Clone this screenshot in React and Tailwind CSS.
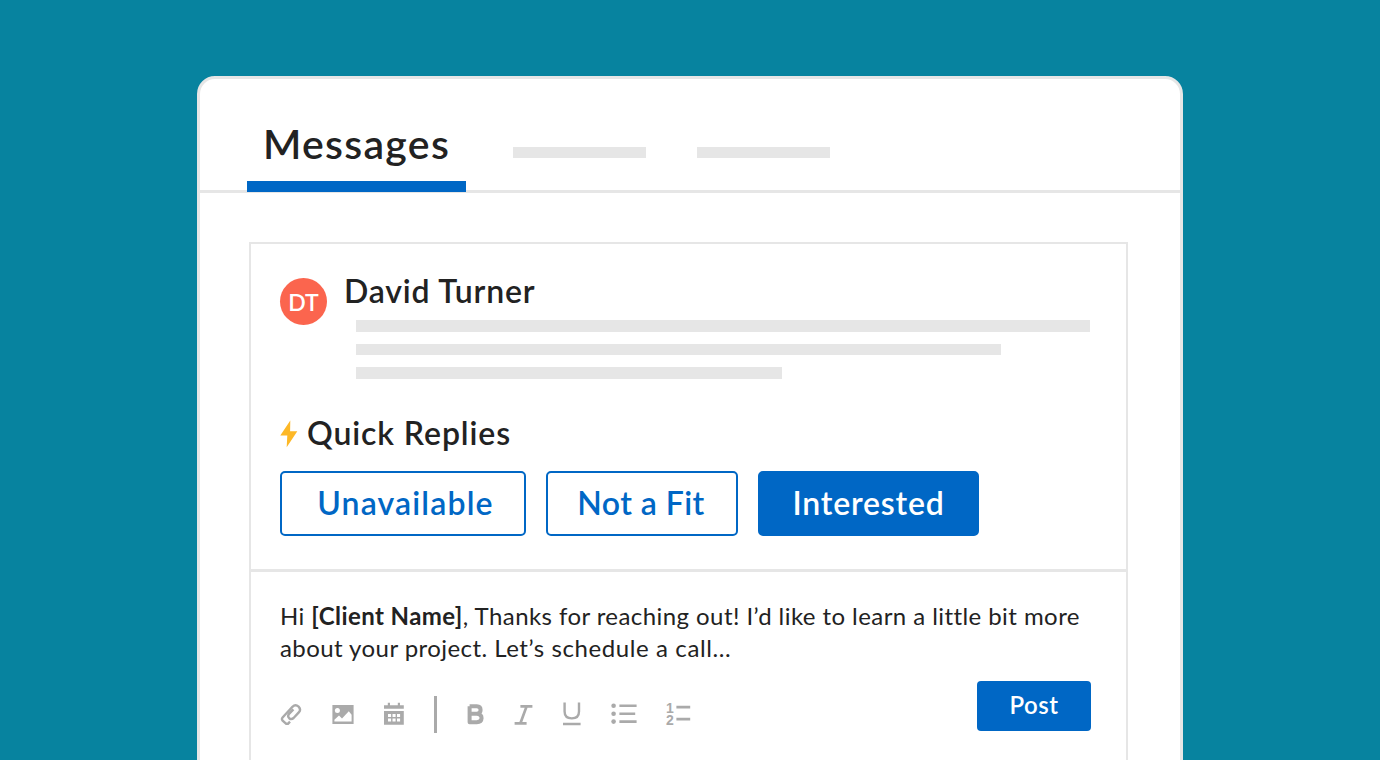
import clsx from 'clsx';

const QUICK_REPLIES = [
  { label: 'Unavailable', box: 'w-[246px]', text: 'tracking-[1.15px] pl-[5px]' },
  { label: 'Not a Fit', box: 'w-[192px]', text: 'tracking-[0.45px] pr-[2px]' },
  { label: 'Interested', box: 'w-[221px]', text: 'tracking-[0.8px]', active: true },
];

function Bar({ className }) {
  return <div className={clsx('bg-[#e6e6e6]', className)} />;
}

function BoltIcon() {
  return (
    <svg width="18" height="28" viewBox="0 0 18 28" fill="#fdb827">
      <path d="M10.3 0.5 L0.3 15.5 H7.3 L6.7 27.3 L17.3 11.3 H10.1 Z" />
    </svg>
  );
}

function LinkIcon() {
  return (
    <svg width="22" height="24" viewBox="0 0 22 24" fill="none" stroke="#aaa" strokeWidth="2.4">
      <path d="M10 19.6 L8 21.8 H6.2 L2.4 18.4 Q1.4 17 2.6 15.4 L12.4 4.8 Q15.4 2 18.6 4.6 Q21.4 7.6 18.8 10.4 L13.6 16 Q11.4 18 9.2 16.2 Q7.2 14.2 9 12 L13.4 7.4" />
    </svg>
  );
}

function ImageIcon() {
  return (
    <svg width="22" height="19" viewBox="0 0 22 19">
      <path d="M0.4 0 H21.6 V19 H0.4 Z" fill="#aaa" />
      <circle cx="5.4" cy="5.5" r="2.5" fill="#fff" />
      <path d="M2.4 16.5 V14.8 L7 10.6 L10 13.4 L16.8 6.3 L19.6 9.8 V16.5 Z" fill="#fff" />
    </svg>
  );
}

function CalendarIcon() {
  return (
    <svg width="20" height="23" viewBox="0 0 20 23">
      <path d="M0 6.8 V3.2 H3.8 V0.8 H6 V3.2 H13.8 V0.8 H16 V3.2 H19.8 V6.8 Z M0 9 H19.8 V22.7 H0 Z" fill="#aaa" />
      <path
        d="M4 12 H7.1 V15 H4 Z M8.5 12 H11.6 V15 H8.5 Z M13 12 H16.1 V15 H13 Z M4 16.6 H7.1 V19.6 H4 Z M8.5 16.6 H11.6 V19.6 H8.5 Z M13 16.6 H16.1 V19.6 H13 Z"
        fill="#fff"
      />
    </svg>
  );
}

function BoldIcon() {
  return (
    <svg width="18" height="21" viewBox="0 0 18 21" fill="none" stroke="#aaa" strokeWidth="4" strokeLinejoin="round">
      <path d="M2.6 2.3 H9.8 Q13.6 2.4 13.6 6 Q13.6 9.6 9.8 9.8 H2.6 M9.8 9.8 Q14.6 10.2 14.6 14.2 Q14.4 18.2 9.8 18.2 H2.6 V2.3" />
    </svg>
  );
}

function ItalicIcon() {
  return (
    <svg width="19" height="20" viewBox="0 0 19 20" fill="none" stroke="#aaa" strokeWidth="2.7">
      <path d="M6.4 1.4 H18.4 M0.6 18.3 H12.6 M12.6 1.4 L6.4 18.3" />
    </svg>
  );
}

function UnderlineIcon() {
  return (
    <svg width="20" height="24" viewBox="0 0 20 24" fill="none" stroke="#aaa" strokeWidth="2.4">
      <path d="M2.6 0.6 V9.6 Q2.6 16.4 9.8 16.4 Q17 16.4 17 9.6 V0.6 M1 22 H18.6" />
    </svg>
  );
}

function BulletListIcon() {
  return (
    <svg width="26" height="22" viewBox="0 0 26 22" fill="#aaa">
      <circle cx="2.6" cy="2.8" r="2.3" />
      <circle cx="2.6" cy="10.7" r="2.3" />
      <circle cx="2.6" cy="18.6" r="2.3" />
      <path d="M8.4 1.4 H25.6 V4.1 H8.4 Z M8.4 9.4 H24.2 V12.1 H8.4 Z M8.4 17.3 H25.6 V20 H8.4 Z" />
    </svg>
  );
}

function NumberedListIcon() {
  return (
    <div className="flex items-center gap-[2px]">
      <div className="flex w-[8px] flex-col font-['Liberation_Sans',sans-serif] text-[14px] leading-[12px] font-bold text-[#aaa]">
        <span>1</span>
        <span>2</span>
      </div>
      <svg width="15" height="24" viewBox="0 0 15 24" fill="#aaa">
        <path d="M0.4 3.8 H14.2 V6.5 H0.4 Z M0.4 15.8 H14.2 V18.5 H0.4 Z" />
      </svg>
    </div>
  );
}

function Toolbar() {
  return (
    <div className="flex h-[38px] items-center">
      <LinkIcon />
      <div className="ml-[30px]"><ImageIcon /></div>
      <div className="ml-[30px] pb-px"><CalendarIcon /></div>
      <div className="ml-[30px] h-[37px] w-[3px] bg-[#aaa]" />
      <div className="ml-[30px] pt-px"><BoldIcon /></div>
      <div className="ml-[29px] pt-px"><ItalicIcon /></div>
      <div className="ml-[29px]"><UnderlineIcon /></div>
      <div className="ml-[29px]"><BulletListIcon /></div>
      <div className="ml-[29px]"><NumberedListIcon /></div>
    </div>
  );
}

export default function App() {
  return (
    <div className="h-[760px] w-[1380px] overflow-hidden bg-[#07839f] pt-[76px] font-[Lato,sans-serif] text-[#222]">
      <div className="mx-auto h-[720px] w-[986px] rounded-[18px] border-[3px] border-[#e6e6e6] bg-white">
        {/* Tabs */}
        <div className="flex h-[114px] border-b-[3px] border-[#e6e6e6] pl-[47px]">
          <div className="-mb-[2px] flex w-[219px] justify-center border-b-[11px] border-[#0067c5] pt-[41px] text-[41px] leading-[48px] font-semibold tracking-[1.3px]">
            Messages
          </div>
          <Bar className="mt-[67.5px] ml-[47px] h-[11.5px] w-[133px]" />
          <Bar className="mt-[67.5px] ml-[50.5px] h-[11.5px] w-[133px]" />
        </div>

        {/* Conversation */}
        <div className="mt-[49px] ml-[49px] h-[600px] w-[879px] border-2 border-[#e6e6e6]">
          <div className="h-[328px] border-b-[3px] border-[#e6e6e6] pt-[34px] pl-[29px]">
            <div className="flex">
              <div className="flex size-[47px] items-center justify-center rounded-full bg-[#fb654e] pt-[2px] text-[23px] font-semibold text-white">
                DT
              </div>
              <div className="ml-[17px]">
                <div className="-mt-[7px] h-[49px] text-[32px] leading-[40px] font-semibold tracking-[0.8px]">David Turner</div>
                <div className="ml-[12px] flex flex-col gap-[12px]">
                  <Bar className="h-[11.5px] w-[734px]" />
                  <Bar className="h-[11.5px] w-[645px]" />
                  <Bar className="h-[11.5px] w-[426px]" />
                </div>
              </div>
            </div>

            <div className="mt-[34px] flex h-[40px] items-center">
              <div className="pt-[3px]"><BoltIcon /></div>
              <div className="ml-[9px] pt-px text-[32px] leading-[40px] font-semibold tracking-[0.9px]">Quick Replies</div>
            </div>

            <div className="mt-[18px] flex gap-[20px]">
              {QUICK_REPLIES.map(({ label, box, text, active }) => (
                <button
                  key={label}
                  className={clsx(
                    'h-[65px] rounded-[5px] border-2 border-[#0067c5] text-[32px] leading-[40px] font-semibold',
                    active ? 'bg-[#0067c5] text-white' : 'bg-white text-[#0067c5]',
                    box,
                    text
                  )}
                >
                  {label}
                </button>
              ))}
            </div>
          </div>

          {/* Reply box */}
          <div className="pt-[28px] pr-[35px] pl-[29px]">
            <div className="text-[24px] leading-[32px] tracking-[0.43px] whitespace-nowrap">
              Hi <b className="font-bold">[Client Name]</b>, Thanks for reaching out! I’d like to learn a little bit more
              <br />
              about your project. <span className="tracking-[0.6px]">Let’s schedule a call...</span>
            </div>
            <div className="mt-[17px] flex items-start justify-between">
              <div className="pt-[14px]"><Toolbar /></div>
              <button className="h-[50px] w-[114px] rounded-[4px] bg-[#0067c5] pb-[2px] text-[24px] font-semibold tracking-[0.5px] text-white">
                Post
              </button>
            </div>
          </div>
        </div>
      </div>
    </div>
  );
}
